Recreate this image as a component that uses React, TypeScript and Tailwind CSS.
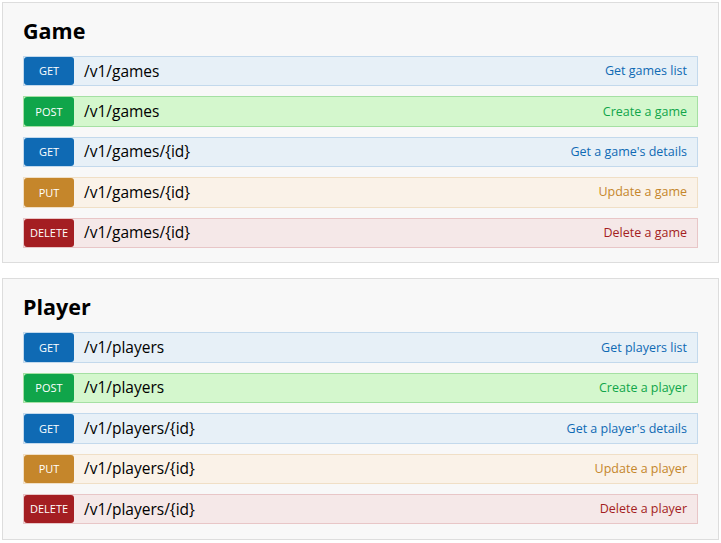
const styles = {
  get: {
    badge: "bg-[#0f6ab4]",
    row: "bg-[#e7f0f7] border-[#c3d9ec]",
    text: "text-[#0f6ab4]",
  },
  post: {
    badge: "bg-[#10a54a]",
    row: "bg-[#d4f7cd] border-[#a5e0a3]",
    text: "text-[#10a54a]",
  },
  put: {
    badge: "bg-[#c5862b]",
    row: "bg-[#faf2e8] border-[#f0dfc6]",
    text: "text-[#c5862b]",
  },
  delete: {
    badge: "bg-[#a41e22]",
    row: "bg-[#f5e8e8] border-[#e8c6c7]",
    text: "text-[#a41e22]",
  },
};

type Method = keyof typeof styles;

const sections: {
  title: string;
  endpoints: { method: Method; path: string; summary: string }[];
}[] = [
  {
    title: "Game",
    endpoints: [
      { method: "get", path: "/v1/games", summary: "Get games list" },
      { method: "post", path: "/v1/games", summary: "Create a game" },
      { method: "get", path: "/v1/games/{id}", summary: "Get a game's details" },
      { method: "put", path: "/v1/games/{id}", summary: "Update a game" },
      { method: "delete", path: "/v1/games/{id}", summary: "Delete a game" },
    ],
  },
  {
    title: "Player",
    endpoints: [
      { method: "get", path: "/v1/players", summary: "Get players list" },
      { method: "post", path: "/v1/players", summary: "Create a player" },
      { method: "get", path: "/v1/players/{id}", summary: "Get a player's details" },
      { method: "put", path: "/v1/players/{id}", summary: "Update a player" },
      { method: "delete", path: "/v1/players/{id}", summary: "Delete a player" },
    ],
  },
];

const App = () => {
  return (
    <div
      className="p-[2px] flex flex-col gap-[15px] bg-white"
      style={{ fontFamily: '"Open Sans", "DejaVu Sans", sans-serif' }}
    >
      {sections.map((section) => (
        <section
          key={section.title}
          className="border border-[#dddddd] bg-[#f8f8f8] px-5 pt-[13px] pb-[14.5px]"
        >
          <h2 className="text-[21.5px] leading-[30px] font-bold text-black mb-[10px]">
            {section.title}
          </h2>
          <div className="flex flex-col gap-[10px]">
            {section.endpoints.map((ep, idx) => {
              const s = styles[ep.method];
              return (
                <div
                  key={idx}
                  className={`h-[30.4px] flex items-center border ${s.row}`}
                >
                  <span
                    className={`w-[50px] h-full rounded-[3px] flex items-center justify-center pt-px text-[11px] uppercase text-white ${s.badge}`}
                  >
                    {ep.method}
                  </span>
                  <span className="pl-[10px] text-[15.5px] text-black">{ep.path}</span>
                  <span className={`ml-auto pr-[10px] pt-px text-[12.5px] ${s.text}`}>
                    {ep.summary}
                  </span>
                </div>
              );
            })}
          </div>
        </section>
      ))}
    </div>
  );
};

export default App;
